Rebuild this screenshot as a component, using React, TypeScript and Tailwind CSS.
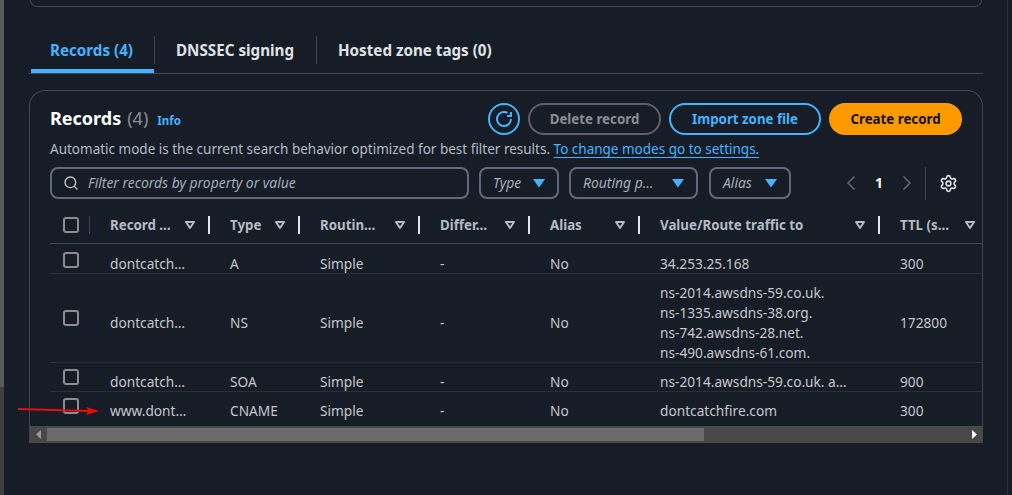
import React from 'react';
import { ChevronLeft, ChevronRight, Search, Settings } from 'lucide-react';

const cols = 'grid grid-cols-[70px_110px_90px_120px_110px_110px_240px_102px]';

const headers = [
  { label: 'Record …', sep: true, pad: 'pl-[10px]' },
  { label: 'Type', sep: true, pad: 'pl-[20px]' },
  { label: 'Routin…', sep: true, pad: 'pl-[20px]' },
  { label: 'Differ…', sep: true, pad: 'pl-[20px]' },
  { label: 'Alias', sep: true, pad: 'pl-[20px]' },
  { label: 'Value/Route traffic to', sep: true, pad: 'pl-[20px]' },
  { label: 'TTL (s…', sep: false, pad: 'pl-[20px]' },
];

const rows = [
  { name: 'dontcatch…', type: 'A', value: ['34.253.25.168'], ttl: '300', h: 'h-[30px]', box: 'pt-[2px]', text: 'pt-[11px]' },
  {
    name: 'dontcatch…',
    type: 'NS',
    value: ['ns-2014.awsdns-59.co.uk.', 'ns-1335.awsdns-38.org.', 'ns-742.awsdns-28.net.', 'ns-490.awsdns-61.com.'],
    ttl: '172800',
    h: 'h-[89px]',
    box: '',
    text: 'pt-[10px]',
  },
  { name: 'dontcatch…', type: 'SOA', value: ['ns-2014.awsdns-59.co.uk. a…'], ttl: '900', h: 'h-[29px]', box: '', text: 'pt-[10px]' },
  { name: 'www.dont…', type: 'CNAME', value: ['dontcatchfire.com'], ttl: '300', h: 'h-[29px]', box: '', text: 'pt-[10px]' },
];

const SortIcon = () => (
  <svg width="12" height="10" viewBox="0 0 12 10" fill="none" stroke="#b4bbc4" strokeWidth="2" strokeLinejoin="round" className="flex-none">
    <path d="M2 2h8L6 8z" />
  </svg>
);

const CaretIcon = () => (
  <svg width="14" height="10" viewBox="0 0 14 10" fill="#42b4ff" className="flex-none">
    <path d="M1 1h12L7 9.5z" />
  </svg>
);

const RefreshIcon = () => (
  <svg width="16" height="16" viewBox="0 0 16 16" fill="none" stroke="#42b4ff" strokeWidth="2">
    <path d="M15 8a7 7 0 1 1-3.5-6.06" />
    <path d="M15 1v4h-4" />
  </svg>
);

const Checkbox = () => <div className="flex-none w-4 h-4 rounded-[3px] border-2 border-[#8c8c94]" />;

const FilterSelect = ({ label, className }: { label: string; className: string }) => (
  <div className={`h-[32px] rounded-lg border-2 border-[#5f6b7a] flex items-center justify-between pl-[12px] pr-[11px] ${className}`}>
    <span className="italic text-[#a4adb8] whitespace-nowrap">{label}</span>
    <CaretIcon />
  </div>
);

export default function App() {
  return (
    <div className="relative w-[1012px] h-[495px] overflow-hidden flex bg-[#161d26] text-[14px] leading-[20px] text-[#c6c6cd] font-['Noto_Sans',sans-serif]">
      <div className="w-[4px] flex-none bg-[#3c3f44]">
        <div className="h-[387px] bg-[#5a5a5a]" />
      </div>
      <main className="w-[954px] ml-[25px] flex-none">
        <div className="h-[7px] mx-[1px] rounded-b-2xl border-x border-b border-[#424650]" />

        <div className="mt-[29px] h-[38px] flex border-b border-[#424650] font-bold text-[15.2px] relative">
          <div className="ml-[2px] w-[123px] pl-[19px] h-[37px] border-b-[4px] border-[#42b4ff] text-[#42b4ff] pt-[4px] whitespace-nowrap">
            Records (4)
          </div>
          <div className="h-[28px] border-l border-[#424650] pl-[21px] pt-[4px] w-[162px] text-[#e0e3e7] whitespace-nowrap">DNSSEC signing</div>
          <div className="h-[28px] border-l border-[#424650] pl-[21px] pt-[4px] text-[#e0e3e7] whitespace-nowrap">Hosted zone tags (0)</div>
        </div>

        <section className="mt-[16px] h-[353px] rounded-t-2xl border-x border-t border-[#424650] flex flex-col">
          <div className="px-[20px] pt-[12px]">
            <div className="flex items-center justify-between h-[32px]">
              <div className="flex items-baseline">
                <h2 className="text-[18px] font-bold text-white">Records</h2>
                <span className="text-[18px] text-[#8c8c94] ml-[6px]">(4)</span>
                <a className="text-[11.5px] font-bold text-[#42b4ff] ml-[9px]">Info</a>
              </div>
              <div className="flex items-center text-[13.3px]">
                <div className="w-[32px] h-[32px] rounded-full border-2 border-[#42b4ff] flex items-center justify-center mr-[8px]">
                  <RefreshIcon />
                </div>
                <button className="w-[133px] h-[32px] rounded-full border-2 border-[#5f5f68] text-[#8c8c94] font-bold mr-[8px]">Delete record</button>
                <button className="w-[152px] h-[32px] rounded-full border-2 border-[#42b4ff] text-[#42b4ff] font-bold mr-[8px]">Import zone file</button>
                <button className="w-[133px] h-[32px] rounded-full bg-[#ff9900] text-[#0f141a] font-bold">Create record</button>
              </div>
            </div>

            <p className="mt-[4px] h-[20px] text-[13.5px] text-[#b4bbc4] whitespace-nowrap">
              Automatic mode is the current search behavior optimized for best filter results.{' '}
              <a className="text-[#42b4ff] underline underline-offset-[3px]">To change modes go to settings.</a>
            </p>

            <div className="mt-[8px] flex items-center h-[32px] text-[13.9px]">
              <div className="w-[419px] h-[32px] rounded-lg border-2 border-[#5f6b7a] flex items-center pl-[11px] mr-[10px]">
                <Search size={16} strokeWidth={2} className="text-[#c6c6cd] mr-[9px]" />
                <span className="italic text-[#a4adb8]">Filter records by property or value</span>
              </div>
              <FilterSelect label="Type" className="w-[80px] mr-[10px]" />
              <FilterSelect label="Routing p…" className="w-[129px] mr-[11px]" />
              <FilterSelect label="Alias" className="w-[82px]" />
              <div className="flex items-center ml-[48px]">
                <ChevronLeft size={24} strokeWidth={1.75} className="text-[#5f636b]" />
                <span className="w-[32px] text-center font-bold text-white">1</span>
                <ChevronRight size={24} strokeWidth={1.75} className="text-[#5f636b]" />
                <div className="h-[33px] border-l border-[#424650] ml-[6px] mr-[13px]" />
                <Settings size={19} strokeWidth={2} className="text-[#e0e3e7]" />
              </div>
            </div>
          </div>

          <div className="flex-1 min-h-0 overflow-hidden flex flex-col">
            <div className={`${cols} mt-[7px] h-[37px] font-bold text-[13.3px] text-[#b4bbc4] items-center`}>
              <div className="h-full flex items-center pl-[33px]">
                <Checkbox />
                <div className="h-[18px] border-l border-[#424650] ml-[10px]" />
              </div>
              {headers.map((h) => (
                <div key={h.label} className={`h-full flex items-center ${h.pad}`}>
                  <span className="flex-1 whitespace-nowrap">{h.label}</span>
                  <SortIcon />
                  <div className={`h-[18px] border-l-2 ${h.sep ? 'ml-[12px] border-[#e0e3e7]' : 'ml-[4px] border-transparent'}`} />
                </div>
              ))}
            </div>
            {rows.map((r, i) => (
              <div key={i} className={`${cols} ${r.h} items-center relative text-[13.7px] text-[#c6c6cd]`}>
                <div className={`absolute top-0 left-[20px] right-0 border-t ${i === 0 ? 'border-[#424650]' : 'border-[#2a2f38]'}`} />
                <div className={`pl-[33px] ${r.box}`}>
                  <Checkbox />
                </div>
                <div className={`pl-[10px] whitespace-nowrap ${r.text}`}>{r.name}</div>
                <div className={`pl-[20px] ${r.text}`}>{r.type}</div>
                <div className={`pl-[20px] ${r.text}`}>Simple</div>
                <div className={`pl-[20px] ${r.text}`}>-</div>
                <div className={`pl-[20px] ${r.text}`}>No</div>
                <div className={`pl-[20px] whitespace-nowrap ${r.text}`}>
                  {r.value.map((v) => (
                    <div key={v}>{v}</div>
                  ))}
                </div>
                <div className={`pl-[20px] ${r.text}`}>{r.ttl}</div>
              </div>
            ))}
          </div>

          <div className="h-[17px] flex-none bg-[#484848] flex items-center">
            <div className="w-[17px] flex justify-center">
              <svg width="6" height="9" viewBox="0 0 6 9" fill="#9a9a9a"><path d="M5 0v9L0 4.5z" /></svg>
            </div>
            <div className="w-[657px] h-[13px] bg-[#6b6b6b]" />
            <div className="flex-1 flex justify-end pr-[5px]">
              <svg width="6" height="9" viewBox="0 0 6 9" fill="#ffffff"><path d="M1 0v9l5-4.5z" /></svg>
            </div>
          </div>
        </section>
      </main>
      <div className="w-[24px] flex-none" />
      <div className="flex-none border-l border-[#2a2f38]" />

      <svg className="absolute left-[18px] top-[403px]" width="82" height="14" viewBox="0 0 82 14" fill="#e80c0c">
        <path d="M0 5 L70 7 L68 4 L81 8 L68 12 L70 9 L0 7z" />
      </svg>
    </div>
  );
}
